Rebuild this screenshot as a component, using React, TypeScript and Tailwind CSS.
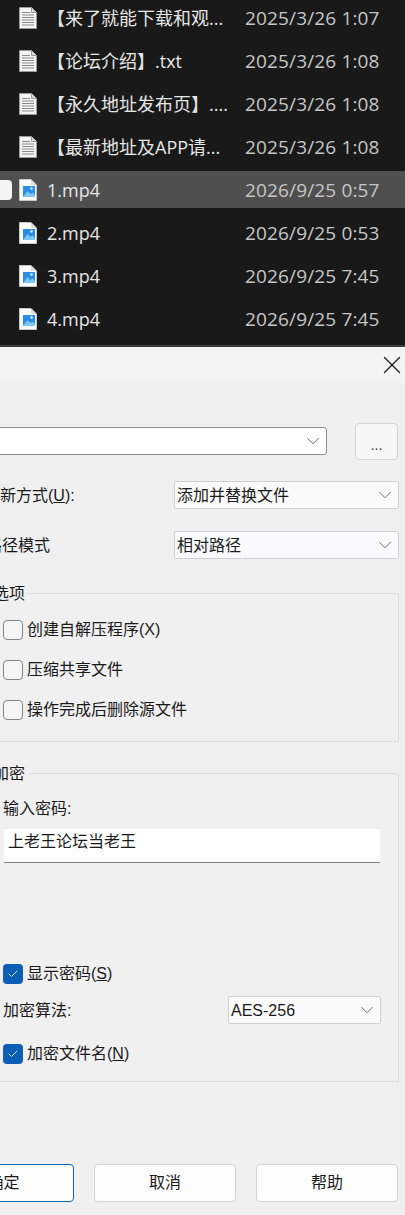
import { ChevronDown, X, Check } from 'lucide-react';

const FONT = "font-['Open_Sans','Noto_Sans_CJK_SC',sans-serif]";
const DIALOG_FONT = "font-['Liberation_Sans','Noto_Sans_CJK_SC',sans-serif]";

const files = [
  { name: '【来了就能下载和观...', date: '2025/3/26 1:07', type: 'doc' },
  { name: '【论坛介绍】.txt', date: '2025/3/26 1:08', type: 'doc' },
  { name: '【永久地址发布页】....', date: '2025/3/26 1:08', type: 'doc' },
  { name: '【最新地址及APP请...', date: '2025/3/26 1:08', type: 'doc' },
  { name: '1.mp4', date: '2026/9/25 0:57', type: 'video', selected: true },
  { name: '2.mp4', date: '2026/9/25 0:53', type: 'video' },
  { name: '3.mp4', date: '2026/9/25 7:45', type: 'video' },
  { name: '4.mp4', date: '2026/9/25 7:45', type: 'video' },
];

const DocIcon = () => (
  <svg width="18" height="22" viewBox="0 0 18 22" className="shrink-0">
    <path d="M0.5 0.5H12.5L17.5 5.5V21.5H0.5Z" fill="#f4f4f4" stroke="#9a9a9a" />
    <path d="M12.5 0.5V5.5H17.5" fill="#d8d8d8" stroke="#9a9a9a" />
    <path
      d="M3 5.5H11M3 8H15M3 10.5H15M3 13H15M3 15.5H15M3 18H15"
      stroke="#8a8a8a"
      strokeWidth="1"
    />
  </svg>
);

const VideoIcon = () => (
  <svg width="18" height="22" viewBox="0 0 18 22" className="shrink-0">
    <path d="M0.5 0.5H12L17.5 6V21.5H0.5Z" fill="#fbfbfb" stroke="#c8c8c8" />
    <path d="M12 0.5V6H17.5" fill="#dcdcdc" />
    <rect x="4" y="7" width="12" height="11" fill="#2a8de8" />
    <path d="M4 18L8.5 12L11.5 15L13.5 13.5L16 16V18Z" fill="#7cc8f5" />
    <circle cx="12.5" cy="9.5" r="1.3" fill="#d8efff" />
  </svg>
);

const Box = ({ checked }: { checked?: boolean }) =>
  checked ? (
    <span className="flex h-5 w-5 shrink-0 items-center justify-center rounded-[4px] bg-[#0a5fb4]">
      <Check size={12} color="#ffffff" strokeWidth={1.5} />
    </span>
  ) : (
    <span className="h-5 w-5 shrink-0 rounded-[4px] border border-[#858585] bg-[#f5f5f5]" />
  );

const CheckRow = ({ checked, label, className = '' }: { checked?: boolean; label: React.ReactNode; className?: string }) => (
  <div className={`flex h-5 items-center gap-1 pl-[2px] text-[16px] text-[#1a1a1a] ${className}`}>
    <Box checked={checked} />
    <span className="whitespace-nowrap">{label}</span>
  </div>
);

const Combo = ({ text, className = '' }: { text?: string; className?: string }) => (
  <div className={`flex h-7 items-center justify-between rounded-[2px] border border-[#cfcfcf] pl-[2px] pr-[2px] text-[16px] text-[#1a1a1a] ${className}`}>
    <span className="pt-[2px]">{text}</span>
    <ChevronDown size={22} color="#606060" strokeWidth={1} />
  </div>
);

const Btn = ({ label, className = '' }: { label: string; className?: string }) => (
  <div className={`flex h-[38px] items-center justify-center rounded-[4px] border bg-[#fdfdfd] text-[16px] text-[#1a1a1a] ${className}`}>
    {label}
  </div>
);

export default function App() {
  return (
    <div className="h-[1215px] w-[405px] overflow-hidden bg-[#f0f0f0]">
      <div className={`h-[346px] bg-[#191919] ${FONT}`}>
        <div className="-mt-px flex flex-col gap-[6px]">
          {files.map((f) => (
            <div
              key={f.name}
              className={`relative flex h-[37px] items-center pl-[19px] ${f.selected ? 'bg-[#4f4f4f]' : ''}`}
            >
              {f.selected && (
                <span className="absolute -left-2 top-[9px] h-5 w-5 rounded-[4px] bg-[#f4f4f4]" />
              )}
              {f.type === 'doc' ? <DocIcon /> : <VideoIcon />}
              <span className="ml-[10px] w-[198px] whitespace-nowrap pt-[2px] text-[18px] text-[#e6e6e6]">
                {f.name}
              </span>
              <span className="whitespace-nowrap pt-[2px] text-[19px] tracking-[0.15px] text-[#c6c6c6]">{f.date}</span>
            </div>
          ))}
        </div>
      </div>
      <div className="h-[2px] bg-[#3c3c3c]" />

      <div className={`relative ${DIALOG_FONT}`}>
        <div className="flex h-[35px] items-center justify-end bg-[#f3f3f3]">
          <X size={30} color="#1a1a1a" strokeWidth={1} className="-mr-[2px]" />
        </div>

        <div className="mt-[41px] flex items-start pr-[7px]">
          <div className="-ml-4 mt-[4px] flex h-[28px] w-[343px] items-center justify-end rounded-[3px] border border-[#8e8e8e] bg-white pr-[2px]">
            <ChevronDown size={22} color="#606060" strokeWidth={1} />
          </div>
          <div className="ml-auto flex h-[37px] w-[43px] items-end justify-center rounded-[4px] border border-[#d4d4d4] bg-[#f7f7f7] pb-[6px] text-[14px] leading-[16px] text-[#333333]">
            ...
          </div>
        </div>

        <div className="mt-[21px] flex h-7 items-center justify-between pr-[6px]">
          <span className="-ml-4 whitespace-nowrap pt-[2px] text-[16px] text-[#1a1a1a]">
            更新方式(<span className="underline">U</span>):
          </span>
          <Combo text="添加并替换文件" className="w-[225px] bg-[#fbfbfb]" />
        </div>

        <div className="mt-[22px] flex h-7 items-center justify-between pr-[6px]">
          <span className="-ml-[14px] whitespace-nowrap pt-[2px] text-[16px] text-[#1a1a1a]">路径模式</span>
          <Combo text="相对路径" className="w-[225px] bg-[#f9fafd]" />
        </div>

        <div className="relative mr-[6px] -ml-4 mt-[34px] h-[149px] border border-[#dcdcdc] pt-[26px]">
          <span className="absolute -top-[12px] left-2 bg-[#f0f0f0] pr-[3px] text-[16px] text-[#1a1a1a]">选项</span>
          <div className="ml-4 flex flex-col gap-5">
            <CheckRow label={<>创建自解压程序(X)</>} />
            <CheckRow label="压缩共享文件" />
            <CheckRow label="操作完成后删除源文件" />
          </div>
        </div>

        <div className="relative mr-[6px] -ml-4 mt-[31px] h-[309px] border border-[#dcdcdc]">
          <span className="absolute -top-[12px] left-2 bg-[#f0f0f0] pr-[3px] text-[16px] text-[#1a1a1a]">加密</span>
          <div className="ml-4 pt-[24px]">
            <div className="pl-[2px] text-[16px] leading-[22px] text-[#1a1a1a]">输入密码:</div>
            <div className="ml-[3px] mt-[9px] h-[34px] w-[376px] border-b border-[#808080] bg-white pl-1 text-[16px] leading-[26px] text-[#1a1a1a]">
              上老王论坛当老王
            </div>
            <CheckRow checked label={<>显示密码(<span className="underline">S</span>)</>} className="mt-[101px]" />
            <div className="mt-[12px] flex h-7 items-center justify-between pr-[17px]">
              <span className="pl-[2px] pt-[2px] text-[16px] text-[#1a1a1a]">加密算法:</span>
              <Combo text="AES-256" className="w-[153px] bg-[#fbfbfb]" />
            </div>
            <CheckRow checked label={<>加密文件名(<span className="underline">N</span>)</>} className="mt-[20px]" />
          </div>
        </div>

        <div className="mt-[82px] flex gap-5 pr-[6px]">
          <Btn label="确定" className="-ml-[67px] w-[141px] shrink-0 border-[#0a67b5]" />
          <Btn label="取消" className="w-[142px] shrink-0 border-[#d2d2d2]" />
          <Btn label="帮助" className="w-[142px] shrink-0 border-[#d2d2d2]" />
        </div>
      </div>
    </div>
  );
}
